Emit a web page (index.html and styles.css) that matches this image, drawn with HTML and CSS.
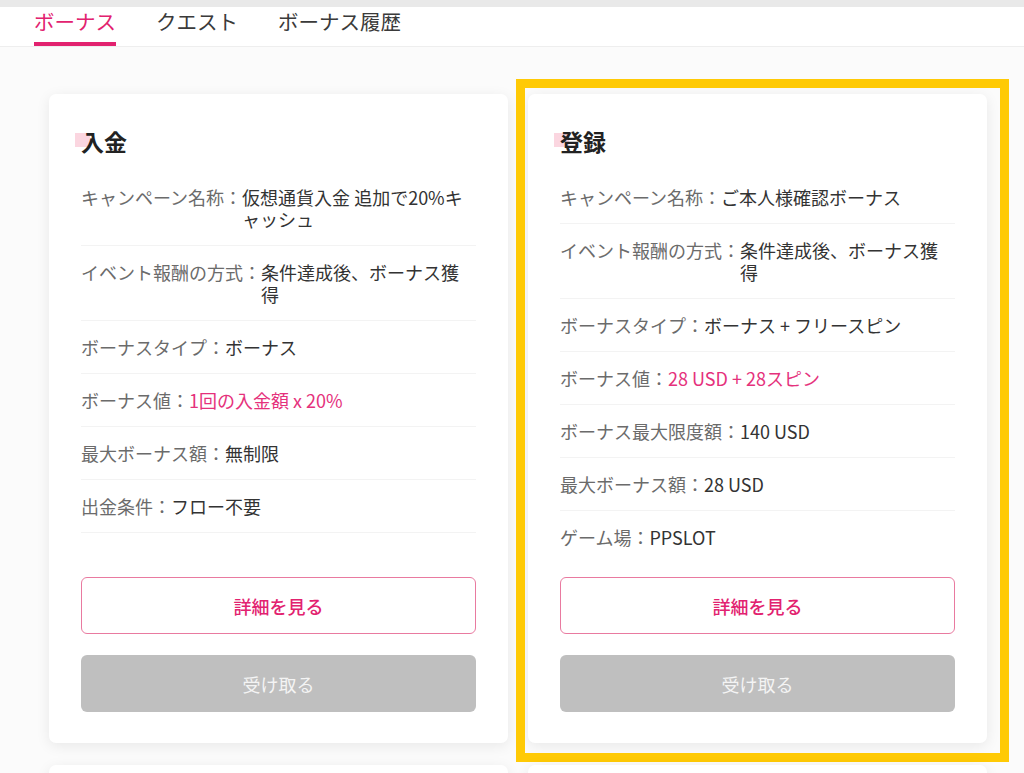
FILE: index.html
```html
<!DOCTYPE html>
<html lang="ja">
<head>
<meta charset="utf-8">
<title>ボーナス</title>
<link rel="stylesheet" href="styles.css">
</head>
<body>
<div class="topband"></div>
<nav class="tabs">
  <span class="tab active">ボーナス</span>
  <span class="tab">クエスト</span>
  <span class="tab">ボーナス履歴</span>
</nav>
<main class="grid">
  <section class="card">
    <h2 class="title">入金</h2>
    <div class="rows">
      <div class="row"><span class="label">キャンペーン名称：</span><span class="value">仮想通貨入金 追加で20%キャッシュ</span></div>
      <div class="row"><span class="label">イベント報酬の方式：</span><span class="value">条件達成後、ボーナス獲得</span></div>
      <div class="row"><span class="label">ボーナスタイプ：</span><span class="value">ボーナス</span></div>
      <div class="row"><span class="label">ボーナス値：</span><span class="value pink">1回の入金額 x 20%</span></div>
      <div class="row"><span class="label">最大ボーナス額：</span><span class="value">無制限</span></div>
      <div class="row"><span class="label">出金条件：</span><span class="value">フロー不要</span></div>
    </div>
    <div class="actions">
      <button class="btn outline">詳細を見る</button>
      <button class="btn disabled">受け取る</button>
    </div>
  </section>
  <section class="card highlight">
    <h2 class="title">登録</h2>
    <div class="rows">
      <div class="row"><span class="label">キャンペーン名称：</span><span class="value">ご本人様確認ボーナス</span></div>
      <div class="row"><span class="label">イベント報酬の方式：</span><span class="value">条件達成後、ボーナス獲得</span></div>
      <div class="row"><span class="label">ボーナスタイプ：</span><span class="value">ボーナス + フリースピン</span></div>
      <div class="row"><span class="label">ボーナス値：</span><span class="value pink">28 USD + 28スピン</span></div>
      <div class="row"><span class="label">ボーナス最大限度額：</span><span class="value">140 USD</span></div>
      <div class="row"><span class="label">最大ボーナス額：</span><span class="value">28 USD</span></div>
      <div class="row last"><span class="label">ゲーム場：</span><span class="value">PPSLOT</span></div>
    </div>
    <div class="actions">
      <button class="btn outline">詳細を見る</button>
      <button class="btn disabled">受け取る</button>
    </div>
  </section>
  <section class="card stub"></section>
  <section class="card stub"></section>
</main>
</body>
</html>
```

FILE: styles.css
```css
* { box-sizing: border-box; }
html, body { margin: 0; padding: 0; }
body {
  background: #fbfbfb;
  font-family: "Noto Sans CJK JP", "Noto Sans", sans-serif;
  color: #333;
  width: 1024px;
  height: 773px;
  overflow: hidden;
}
.topband { height: 7px; background: #e9e9e9; }
.tabs {
  display: flex;
  gap: 40px;
  padding: 0 0 0 34px;
  background: #fff;
  border-bottom: 1px solid #eeeeee;
  height: 40px;
}
.tab {
  font-size: 20.5px;
  line-height: 26px;
  padding-top: 1px;
  color: #3a3a3a;
  height: 39px;
  border-bottom: 4px solid transparent;
}
.tab.active { color: #e2226f; border-bottom-color: #e2226f; }

.grid {
  display: grid;
  grid-template-columns: 459px 459px;
  column-gap: 20px;
  row-gap: 22px;
  padding: 47px 0 0 49px;
}
.card {
  position: relative;
  background: #fff;
  border-radius: 7px;
  box-shadow: 0 3px 14px rgba(0, 0, 0, 0.08);
  padding: 32px 32px 31px;
  display: flex;
  flex-direction: column;
}
.card.stub { height: 120px; }
.highlight::after {
  content: "";
  position: absolute;
  left: -12px;
  top: -15px;
  right: -22px;
  bottom: -19px;
  border: 9px solid #ffca05;
  pointer-events: none;
}
.title {
  position: relative;
  z-index: 0;
  margin: 0 0 15px;
  font-size: 23px;
  line-height: 30px;
  font-weight: 700;
  color: #222;
  align-self: flex-start;
}
.title::before {
  content: "";
  position: absolute;
  left: -6px;
  top: 7px;
  width: 15px;
  height: 14px;
  background: #fbd6e0;
  z-index: -1;
}
.row {
  display: flex;
  font-size: 18px;
  line-height: 22px;
  padding: 15px 0;
  border-bottom: 1px solid #f3f3f3;
}
.row.last { border-bottom: none; }
.label { flex: none; color: #6b6b6b; }
.value { flex: 1; color: #333; }
.value.pink { color: #e5317c; }
.actions {
  margin-top: auto;
  padding-top: 14px;
  display: flex;
  flex-direction: column;
  gap: 21px;
}
.btn {
  font-family: inherit;
  font-size: 18px;
  height: 57px;
  border-radius: 6px;
  width: 100%;
  cursor: pointer;
}
.btn.outline {
  background: #fff;
  border: 1px solid #e97aa0;
  color: #e2226f;
  font-weight: 500;
}
.btn.disabled {
  background: #bfbfbf;
  border: none;
  color: #f4f4f4;
}
```
